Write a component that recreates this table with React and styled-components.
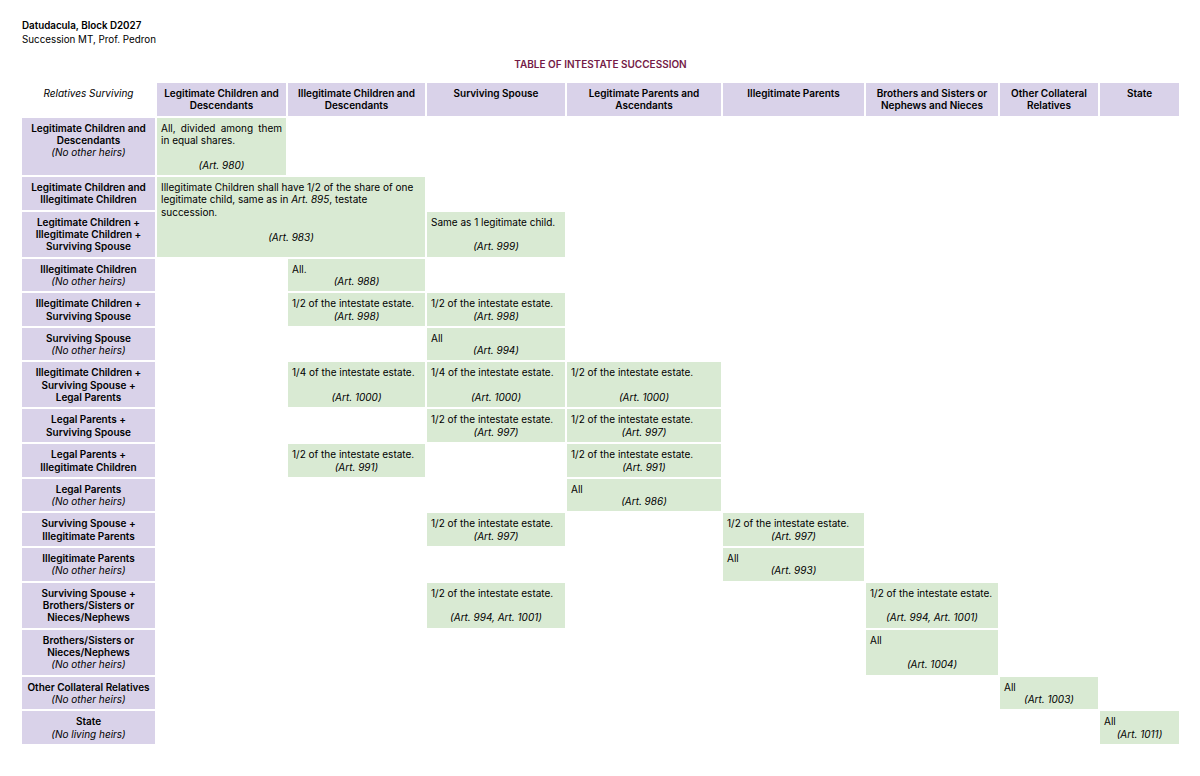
import React from 'react';
import styled, { createGlobalStyle } from 'styled-components';

const GlobalStyle = createGlobalStyle`
  html, body {
    margin: 0;
    padding: 0;
    background: #fff;
  }
  body {
    font-family: Inter, "Noto Sans", "Liberation Sans", sans-serif;
    color: #000;
  }
`;

const Page = styled.div`
  width: 1200px;
  height: 776px;
  padding: 19px 0 0 20px;
  box-sizing: border-box;
  overflow: hidden;
`;

const Heading = styled.div`
  padding-left: 2px;
  font-size: 9.8px;
  line-height: 14px;
`;

const Author = styled.div`
  font-weight: 600;
`;

const Title = styled.div`
  width: 1161px;
  margin: 11px 0 11px;
  text-align: center;
  font-size: 10px;
  line-height: 12px;
  font-weight: 600;
  color: #741b47;
`;

const Table = styled.table`
  table-layout: fixed;
  border-collapse: separate;
  border-spacing: 2px;
  width: 1161px;
  font-size: 10px;
  line-height: 12.4px;
`;

const Cell = styled.td`
  vertical-align: top;
  padding: 4px 4px 3.8px;
  background: ${p => (p.$filled ? '#d9ead3' : 'transparent')};
  text-align: ${p => (p.$justify ? 'justify' : 'left')};
`;

const HeadCell = styled.th`
  vertical-align: top;
  padding: 4px 4px 3.8px;
  text-align: center;
  font-weight: ${p => (p.$plain ? 400 : 600)};
  font-style: ${p => (p.$plain ? 'italic' : 'normal')};
  background: ${p => (p.$plain ? 'transparent' : '#d9d2e9')};
`;

const Note = styled.div`
  font-style: italic;
  font-weight: 400;
`;

const Art = styled.div`
  text-align: center;
  font-style: italic;
  margin-top: ${p => (p.$gap ? '12.4px' : '0')};
`;

const widths = [133, 129, 137, 138, 154, 141, 132, 98, 79];

const columns = [
  ['Legitimate Children and', 'Descendants'],
  ['Illegitimate Children and', 'Descendants'],
  ['Surviving Spouse'],
  ['Legitimate Parents and', 'Ascendants'],
  ['Illegitimate Parents'],
  ['Brothers and Sisters or', 'Nephews and Nieces'],
  ['Other Collateral', 'Relatives'],
  ['State'],
];

const half = '1/2 of the intestate estate.';
const none = '(No other heirs)';

const rows = [
  {
    head: ['Legitimate Children and', 'Descendants'], note: none,
    cells: { 1: { text: 'All, divided among them in equal shares.', justify: true, gap: true, art: '(Art. 980)' } },
  },
  {
    head: ['Legitimate Children and', 'Illegitimate Children'],
    cells: {
      1: {
        colSpan: 2, rowSpan: 2, gap: true, art: '(Art. 983)',
        text: <>Illegitimate Children shall have 1/2 of the share of one<br />legitimate child, same as in <i>Art. 895</i>, testate<br />succession.</>,
      },
    },
  },
  {
    head: ['Legitimate Children +', 'Illegitimate Children +', 'Surviving Spouse'], skip: [1, 2],
    cells: { 3: { text: 'Same as 1 legitimate child.', gap: true, art: '(Art. 999)' } },
  },
  {
    head: ['Illegitimate Children'], note: none,
    cells: { 2: { text: 'All.', art: '(Art. 988)' } },
  },
  {
    head: ['Illegitimate Children +', 'Surviving Spouse'],
    cells: { 2: { text: half, art: '(Art. 998)' }, 3: { text: half, art: '(Art. 998)' } },
  },
  {
    head: ['Surviving Spouse'], note: none,
    cells: { 3: { text: 'All', art: '(Art. 994)' } },
  },
  {
    head: ['Illegitimate Children +', 'Surviving Spouse +', 'Legal Parents'],
    cells: {
      2: { text: '1/4 of the intestate estate.', gap: true, art: '(Art. 1000)' },
      3: { text: '1/4 of the intestate estate.', gap: true, art: '(Art. 1000)' },
      4: { text: half, gap: true, art: '(Art. 1000)' },
    },
  },
  {
    head: ['Legal Parents +', 'Surviving Spouse'],
    cells: { 3: { text: half, art: '(Art. 997)' }, 4: { text: half, art: '(Art. 997)' } },
  },
  {
    head: ['Legal Parents +', 'Illegitimate Children'],
    cells: { 2: { text: half, art: '(Art. 991)' }, 4: { text: half, art: '(Art. 991)' } },
  },
  {
    head: ['Legal Parents'], note: none,
    cells: { 4: { text: 'All', art: '(Art. 986)' } },
  },
  {
    head: ['Surviving Spouse +', 'Illegitimate Parents'],
    cells: { 3: { text: half, art: '(Art. 997)' }, 5: { text: half, art: '(Art. 997)' } },
  },
  {
    head: ['Illegitimate Parents'], note: none,
    cells: { 5: { text: 'All', art: '(Art. 993)' } },
  },
  {
    head: ['Surviving Spouse +', 'Brothers/Sisters or', 'Nieces/Nephews'],
    cells: {
      3: { text: half, gap: true, art: '(Art. 994, Art. 1001)' },
      6: { text: half, gap: true, art: '(Art. 994, Art. 1001)' },
    },
  },
  {
    head: ['Brothers/Sisters or', 'Nieces/Nephews'], note: none,
    cells: { 6: { text: 'All', gap: true, art: '(Art. 1004)' } },
  },
  {
    head: ['Other Collateral Relatives'], note: none,
    cells: { 7: { text: 'All', art: '(Art. 1003)' } },
  },
  {
    head: ['State'], note: '(No living heirs)',
    cells: { 8: { text: 'All', art: '(Art. 1011)' } },
  },
];

const Lines = ({ lines }) => lines.map((l, i) => (
  <React.Fragment key={i}>{i > 0 && <br />}{l}</React.Fragment>
));

function Row({ row }) {
  const out = [];
  let col = 1;
  while (col <= 8) {
    if (row.skip && row.skip.includes(col)) { col += 1; continue; }
    const c = row.cells[col];
    if (c) {
      out.push(
        <Cell key={col} $filled $justify={c.justify} colSpan={c.colSpan} rowSpan={c.rowSpan}>
          <div>{c.text}</div>
          <Art $gap={c.gap}>{c.art}</Art>
        </Cell>
      );
      col += c.colSpan || 1;
    } else {
      out.push(<Cell key={col} />);
      col += 1;
    }
  }
  return (
    <tr>
      <HeadCell scope="row">
        <Lines lines={row.head} />
        {row.note && <Note>{row.note}</Note>}
      </HeadCell>
      {out}
    </tr>
  );
}

export default function App() {
  return (
    <>
      <GlobalStyle />
      <Page>
        <Heading>
          <Author>Datudacula, Block D2027</Author>
          <div>Succession MT, Prof. Pedron</div>
        </Heading>
        <Title>TABLE OF INTESTATE SUCCESSION</Title>
        <Table>
          <colgroup>
            {widths.map((w, i) => <col key={i} style={{ width: w }} />)}
          </colgroup>
          <thead>
            <tr>
              <HeadCell $plain>Relatives Surviving</HeadCell>
              {columns.map((c, i) => (
                <HeadCell key={i}><Lines lines={c} /></HeadCell>
              ))}
            </tr>
          </thead>
          <tbody>
            {rows.map((r, i) => <Row key={i} row={r} />)}
          </tbody>
        </Table>
      </Page>
    </>
  );
}
